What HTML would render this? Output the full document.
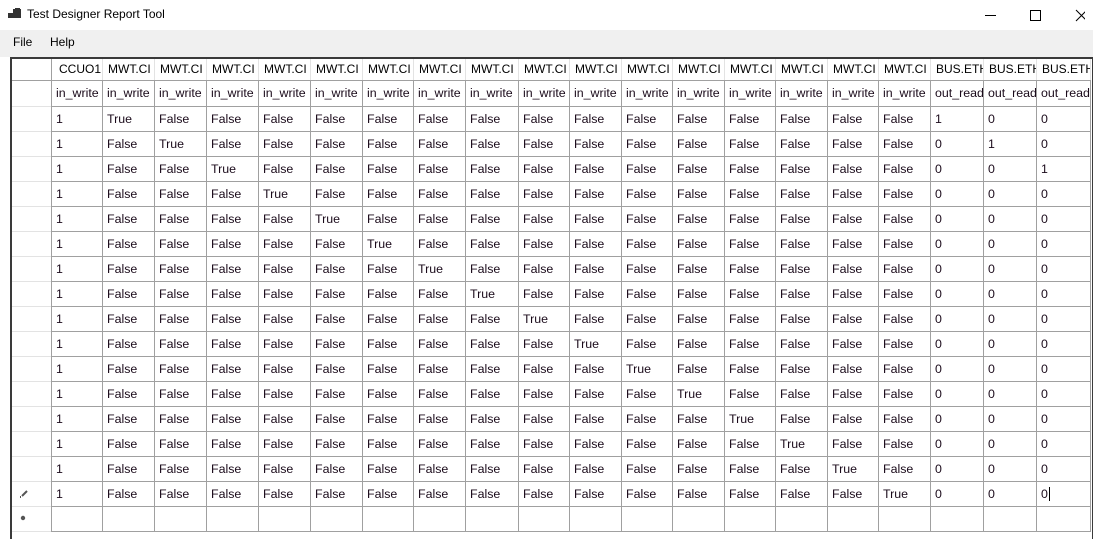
<!DOCTYPE html>
<html><head><meta charset="utf-8">
<style>
body{margin:0;width:1093px;height:532px;overflow:hidden;background:#fff;font-family:"Liberation Sans",sans-serif;position:relative}
.title{position:absolute;left:0;top:0;width:1093px;height:30px;background:#fff}
.title span{position:absolute;left:27px;top:7px;font-size:12px;color:#000}
.menu{position:absolute;left:0;top:30px;width:1093px;height:27px;background:#f0f0f0}
.menu span{position:absolute;top:5px;font-size:12px;color:#000}
.grid{position:absolute;left:10px;top:57px;width:1080px;height:480px;border:2px solid #3a3a3a;border-bottom:none;background:#fff;overflow:hidden}
.c{position:absolute;box-sizing:border-box;font-size:12.4px;color:#1a0a1a;padding-left:5px;white-space:nowrap;overflow:hidden;line-height:26px}
</style></head><body>
<div class="title">
<svg style="position:absolute;left:8px;top:8px" width="14" height="14"><rect x="0" y="5" width="5" height="5" fill="#333"/><rect x="5" y="1" width="8" height="9" fill="#333"/><rect x="7" y="0" width="5" height="3" fill="#333"/></svg>
<span>Test Designer Report Tool</span>
<svg style="position:absolute;left:985px;top:9px" width="100" height="14"><line x1="0" y1="6.5" x2="11" y2="6.5" stroke="#000"/><rect x="45.5" y="1.5" width="10" height="10" fill="none" stroke="#000"/><path d="M91 1L102 12M102 1L91 12" stroke="#000" fill="none"/></svg>
</div>
<div class="menu"><span style="left:13px">File</span><span style="left:50px">Help</span></div>
<div class="grid" id="g"></div>
<script>
var g=document.getElementById('g');
var B=[51,102,154,206,258,310,362,413,465,518,569,621,672,724,775,827,878,930,983,1036,1090];
var ox=12,oy=59,h='';
function cell(x1,y1,x2,y2,t,st){h+='<div class="c" style="left:'+(x1-ox)+'px;top:'+(y1-oy)+'px;width:'+(x2-x1+1)+'px;height:'+(y2-y1+1)+'px;'+st+'">'+t+'</div>';}
var rows=[[59,80]];rows.push([80,106]);for(var i=0;i<17;i++)rows.push([106+25*i,131+25*i]);
rows.forEach(function(r,ri){
 var icon='';
 if(ri==17)icon='<svg style="position:absolute;left:7px;top:8px" width="10" height="10"><path d="M1 8L2 8M3 7L8 2" stroke="#555" stroke-width="2"/></svg>';
 if(ri==18)icon='<svg style="position:absolute;left:8px;top:9px" width="8" height="8"><circle cx="3" cy="3" r="2.2" fill="#555"/></svg>';
 cell(12,r[0],51,r[1],icon,'border-right:1px solid #a0a0a0;border-bottom:1px solid '+(ri==0?'#a0a0a0':'#e3e3e3')+';');
});
var hd=['CCUO1.'];for(var i=0;i<16;i++)hd.push('MWT.CI');hd.push('BUS.ETH_','BUS.ETH_','BUS.ETH');
for(var c=0;c<20;c++){
 cell(B[c],59,B[c+1],80,hd[c],'border-right:1px solid #e3e3e3;border-bottom:1px solid #a0a0a0;color:#000;font-size:12px;padding-left:'+(c==0?8:6)+'px;line-height:21px;');
 cell(B[c],80,B[c+1],106,c<17?'in_write':'out_read','border-right:1px solid #a0a0a0;border-bottom:1px solid #a0a0a0;');
 for(var r=0;r<17;r++){
  var t='';
  if(r<16){
   if(c==0)t='1';else if(c<17)t=(c-1==r)?'True':'False';else t=((c-17)==r)?'1':'0';
   if(r==15&&c==19)t='0<span style="border-left:1px solid #000;margin-left:1px"></span>';
  }
  cell(B[c],106+25*r,B[c+1],131+25*r,t,'border-right:1px solid #a0a0a0;border-bottom:1px solid #a0a0a0;');
 }
}
g.innerHTML=h;
</script>
</body></html>
